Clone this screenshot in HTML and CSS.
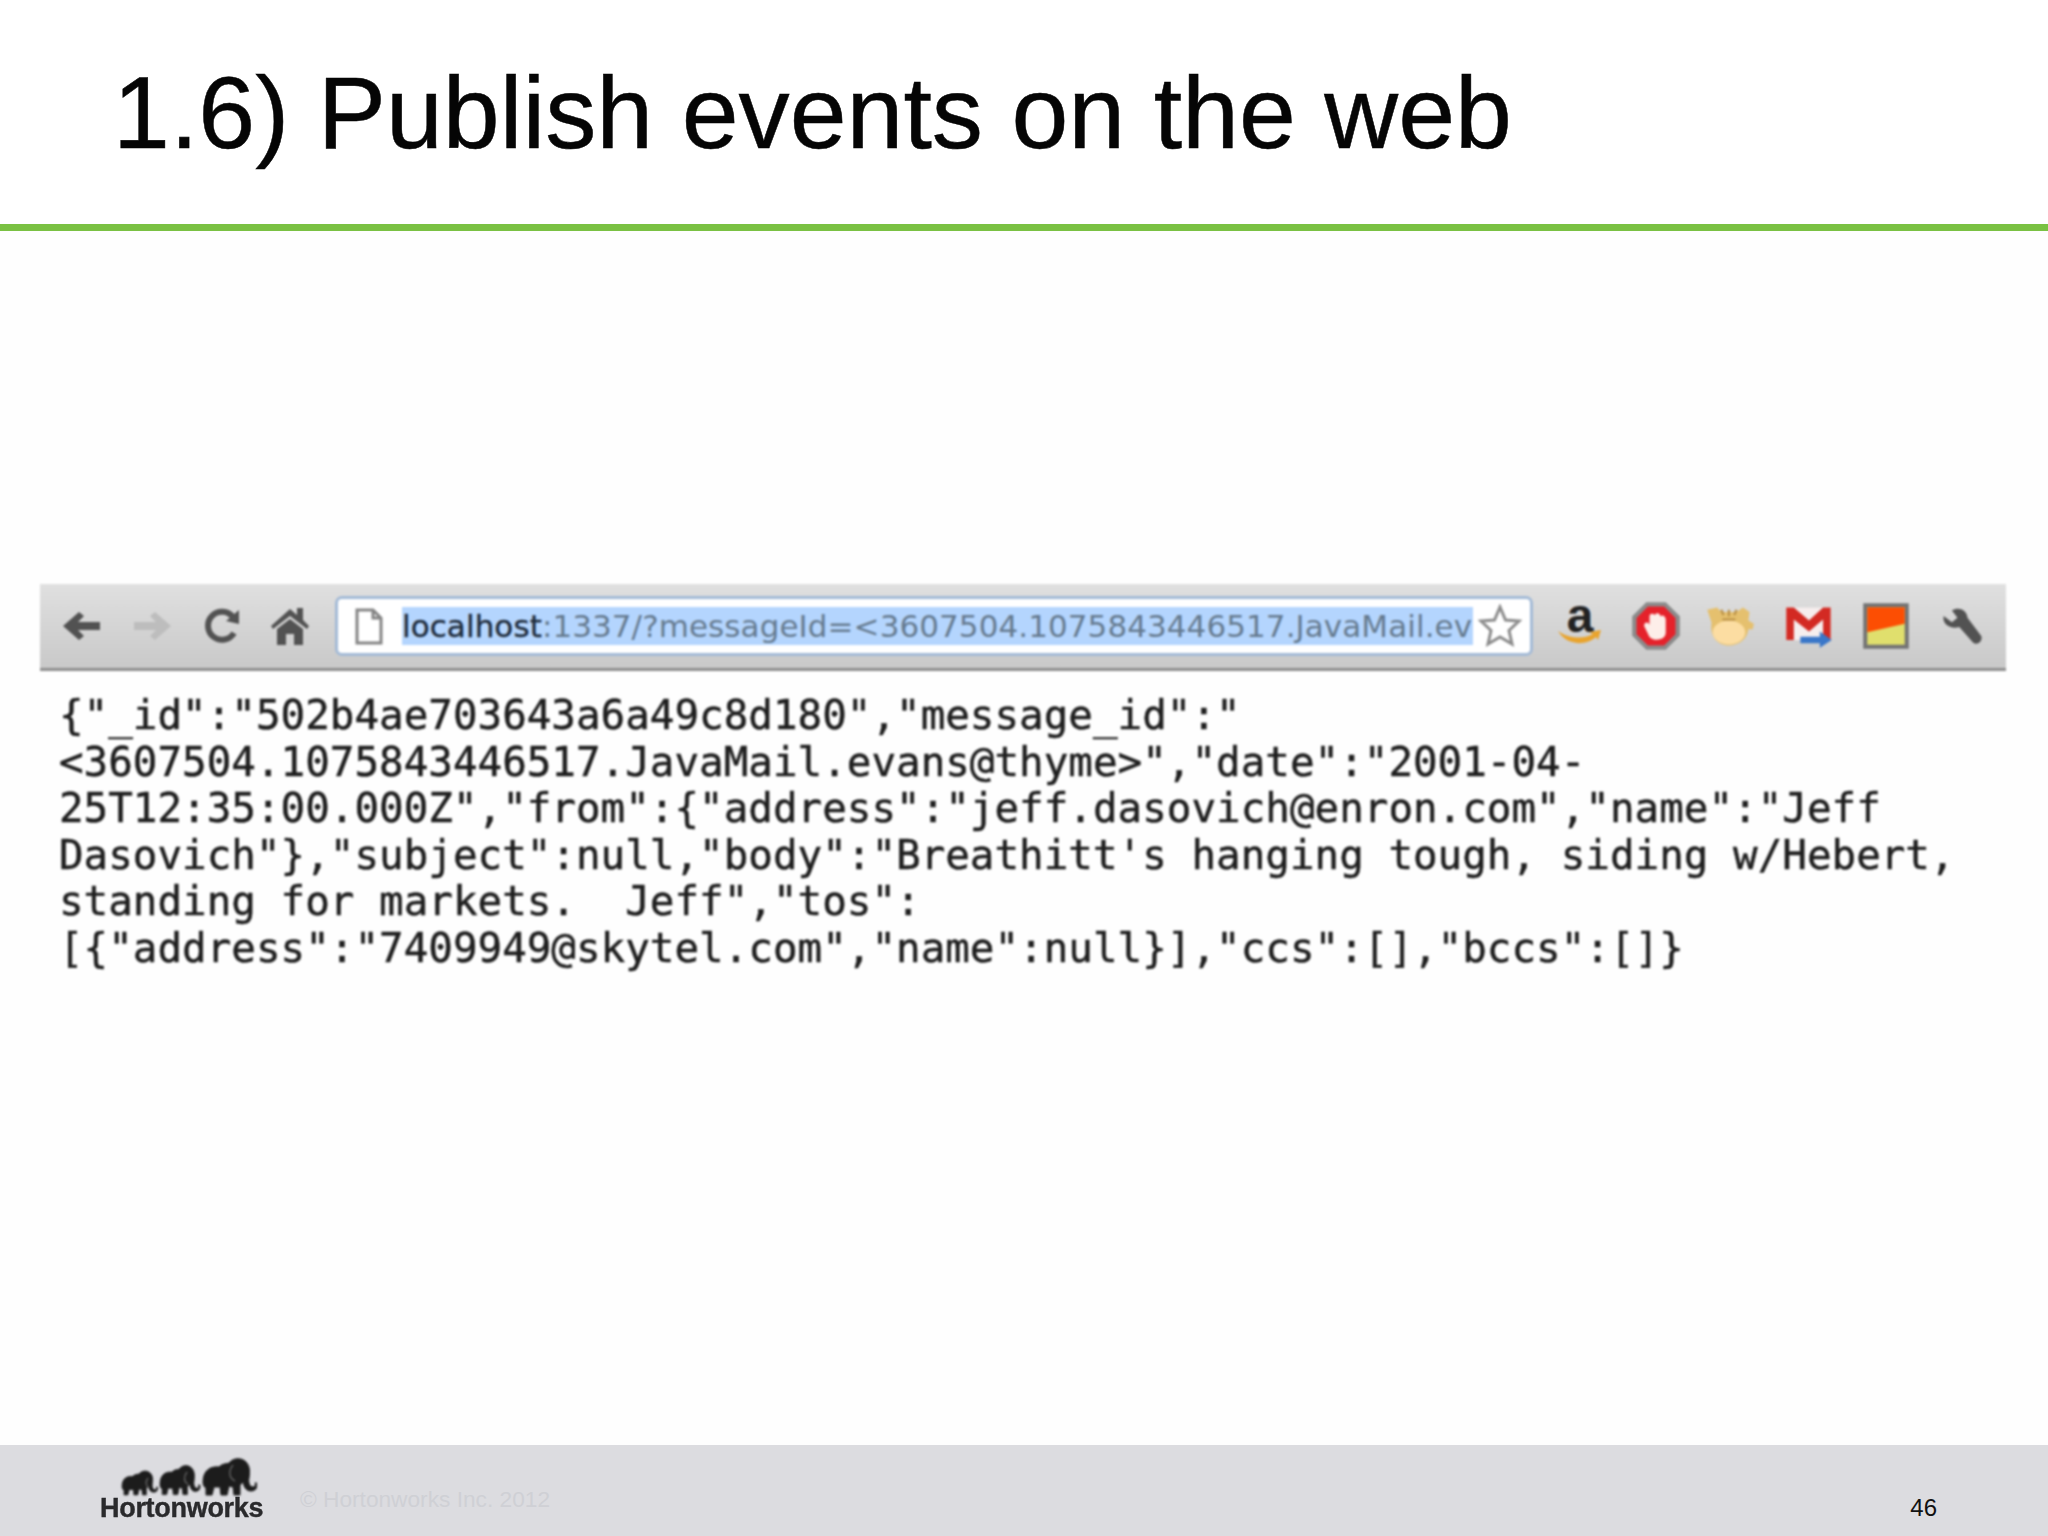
FILE: index.html
```html
<!DOCTYPE html>
<html lang="en">
<head>
<meta charset="utf-8">
<title>1.6) Publish events on the web</title>
<link rel="stylesheet" href="styles.css">
</head>
<body>
<div class="slide">
  <header class="head"><h1 class="title">1.6) Publish events on the web</h1></header>
  <div class="rule"></div>
  <main class="content">
    <section class="shot">
      <div class="toolbar">
        <svg class="ico" viewBox="0 0 44 44"><path class="nav-dark" d="M3 22 L19 8 L24 12 L18 18 H40 V26 H18 L24 32 L19 36 Z"/></svg>
        <svg class="ico" viewBox="0 0 44 44"><path class="nav-light" d="M41 22 L25 8 L20 12 L26 18 H4 V26 H26 L20 32 L25 36 Z"/></svg>
        <svg class="ico" viewBox="0 0 44 44"><path class="reload" d="M34 29 A14 14 0 1 1 33 13"/><path class="nav-dark" d="M26 17 L39 6 V20 Z"/></svg>
        <svg class="ico" viewBox="0 0 44 44"><path class="nav-dark" d="M22 5 L29 11 V4 H35 V16 L41 22 L39 25 L22 12 L5 25 L3 22 Z M9 25 L22 15 L35 25 V41 H26 V30 H18 V41 H9 Z"/></svg>
        <div class="urlbox">
          <svg class="doc" viewBox="0 0 28 37"><path d="M2 2 H18 L26 10 V35 H2 Z M18 2 V10 H26"/></svg>
          <div class="url"><span class="host">localhost</span>:1337/?messageId=&lt;3607504.1075843446517.JavaMail.ev</div>
          <svg class="star" viewBox="0 0 44 44"><path d="M22 3 L27.5 16 L41 17 L31 26.500 L34 40 L22 33 L10 40 L13 26.500 L3 17 L16.500 16 Z"/></svg>
        </div>
        <div class="amazon"><span class="amazon-a">a</span>
          <svg class="smile" viewBox="0 0 44 16"><path d="M0 2 C10 9 24 11 35 5 L31 3 L43 1 L40 11 L38 8 C28 17 9 17 0 2 Z"/></svg>
        </div>
        <svg class="ico ico-lg" viewBox="0 0 48 48"><path class="oct-out" d="M15 2 H33 L46 15 V33 L33 46 H15 L2 33 V15 Z"/><path class="oct-in" d="M16.500 6 H31.500 L42 16.500 V31.500 L31.500 42 H16.500 L6 31.500 V16.500 Z"/><path class="hand" d="M13 24 C13 20 17 20 18 23 V15 C18 12 22 12 23 14 C24 11 28 12 28 15 C30 13 33 15 33 18 V30 C33 38 19 39 17 32 Z"/></svg>
        <svg class="ico ico-lg" viewBox="0 0 48 48"><path class="cat-dark" d="M3 9 L12 7 L16 11 H30 L36 7 L42 11 L41 19 L46 22 L45 27 L41 27 C40 36 32 42 23 42 C13 42 5 34 7 21 Z"/><ellipse class="cat-light" cx="23" cy="30" rx="15" ry="11"/><path class="cat-mark" d="M18 14 L16 9 M23 15 V9 M28 14 L30 9 M17 18 H29"/></svg>
        <svg class="ico ico-lg" viewBox="0 0 48 48"><rect class="gm-white" x="3" y="7" width="41" height="30"/><path class="gm-red" d="M3 7 H10 L24 19 L37 7 H44 V37 H37 V18 L24 29 L10 18 V37 H3 Z"/><path class="gm-blue" d="M16 34 H34 V29 L45 37 L34 44 V40 H16 Z"/></svg>
        <svg class="ico ico-lg" viewBox="0 0 48 48"><rect class="sq-frame" x="3" y="3" width="42" height="42"/><rect class="sq-yellow" x="6.700" y="6.700" width="34.600" height="34.600"/><path class="sq-orange" d="M6.700 6.700 H41.300 V22 L6.700 29.800 Z"/></svg>
        <svg class="ico" viewBox="0 0 48 48"><path class="nav-dark" d="M4 13 L13 20 L19 15 L13 7 C20 3 29 6 30 15 L45 35 C47 40 41 46 36 42 L21 25 C12 28 2 22 4 13 Z"/></svg>
      </div>
      <div class="page">{"_id":"502b4ae703643a6a49c8d180","message_id":"
&lt;3607504.1075843446517.JavaMail.evans@thyme&gt;","date":"2001-04-
25T12:35:00.000Z","from":{"address":"jeff.dasovich@enron.com","name":"Jeff
Dasovich"},"subject":null,"body":"Breathitt's hanging tough, siding w/Hebert,
standing for markets.  Jeff","tos":
[{"address":"7409949@skytel.com","name":null}],"ccs":[],"bccs":[]}</div>
    </section>
  </main>
  <footer class="foot">
    <div class="logo">
      <svg class="herd" viewBox="0 0 136 38">
        <defs>
          <g id="eleph">
            <path d="M0 24 C0 12 8 8 16 9 C20 5 24 6 26 5 C30 0 38 -1 43 4 C47 8 47 14 46 20 C45 25 47 29 50 29 C52 29 53 27 52 25 L54 25 C55 30 52 33 48 33 C43 33 41 29 40 24 L37 27 L37 37 L31 37 L30 29 L26 28 L24 37 L18 37 L17 29 L11 29 L9 37 L3 37 L3 30 C1 29 0 27 0 24 Z"/>
          </g>
        </defs>
        <use href="#eleph" class="herd-one" transform="translate(1 12.500) scale(.66 .66)"/>
        <path class="herd-ear" d="M27 20 C24 24 25 28 28 30"/>
        <use href="#eleph" class="herd-one" transform="translate(39 7) scale(.74 .8)"/>
        <path class="herd-ear" d="M66 14 C62 19 63 24 67 26"/>
        <use href="#eleph" class="herd-one" transform="translate(82 0)"/>
        <path class="herd-ear" d="M112 7 C107 13 108 20 114 23"/>
      </svg>
      <div class="brand">Hortonworks</div>
    </div>
    <div class="copy">© Hortonworks Inc. 2012</div>
    <div class="pageno">46</div>
  </footer>
</div>
</body>
</html>
```

FILE: styles.css
```css
* { box-sizing: border-box; }
html, body { margin: 0; padding: 0; background: #fff; }
.slide { width: 2048px; height: 1536px; display: flex; flex-direction: column; overflow: hidden; font-family: "Liberation Sans", Arial, sans-serif; background: #fff; }

.head { height: 224px; padding: 47px 0 0 113px; }
.title { margin: 0; font-weight: 400; font-size: 102.3px; line-height: 132px; color: #050505; white-space: nowrap; -webkit-text-stroke: .5px #050505; }
.rule { height: 7px; background: #7ac143; }

.content { flex: 1; padding: 353px 42px 0 40px; background: #fefefe; }
.shot { filter: blur(.9px); }

.toolbar { height: 87px; padding: 0 0 0 7px; display: grid; grid-template-columns: 70px 70px 70px 66px 1219px 76px 76px 72px 86px 68px 84px; align-items: center; justify-items: center; background: linear-gradient(#e0e0e0, #c9c9c9); border-bottom: 3px solid #8e8e8e; }
.ico { width: 44px; height: 44px; display: block; }
.ico-lg { width: 52px; height: 52px; }
.nav-dark { fill: #525252; }
.nav-light { fill: #bdbdbd; }
.reload { fill: none; stroke: #525252; stroke-width: 6; }

.urlbox { justify-self: stretch; margin: 0 9px 0 12px; height: 60px; padding: 0 20px 0 17px; display: flex; align-items: center; gap: 19px; background: #fff; border: 3px solid #a3bad6; border-radius: 7px; position: relative; }
.doc { width: 28px; height: 37px; flex: none; fill: none; stroke: #858585; stroke-width: 3; }
.url { width: 1071px; height: 38px; flex: none; overflow: hidden; white-space: nowrap; background: #b4d5fe; color: #667b90; font-family: "DejaVu Sans", sans-serif; font-size: 31px; line-height: 38px; letter-spacing: .08px; }
.host { color: #1f2d3d; -webkit-text-stroke: .4px #1f2d3d; }
.star { position: absolute; right: 8px; top: 5px; width: 44px; height: 44px; fill: #fff; stroke: #8c8c8c; stroke-width: 3; }

.amazon { width: 46px; height: 46px; display: flex; flex-direction: column; align-items: center; }
.amazon-a { font-size: 48px; line-height: 26px; height: 26px; font-weight: 700; color: #222; }
.smile { width: 44px; height: 16px; fill: #e9a42e; }

.oct-out { fill: #8b8b8b; }
.oct-in { fill: #e5222b; }
.hand { fill: #fdeee9; }
.cat-dark { fill: #e5c06e; }
.cat-light { fill: #fcdda2; }
.cat-mark { fill: none; stroke: #b98f45; stroke-width: 2; }
.gm-white { fill: #f6eeee; }
.gm-red { fill: #d32a23; }
.gm-blue { fill: #3a77c9; }
.sq-frame { fill: #737373; }
.sq-yellow { fill: #e0df6d; }
.sq-orange { fill: #fc4e03; }

.page { margin: 0; padding: 21px 0 0 19px; font-family: "DejaVu Sans Mono", monospace; font-size: 40.9px; line-height: 46.6px; color: #1e1e1e; white-space: pre; -webkit-text-stroke: .5px #1e1e1e; }

.foot { height: 91px; padding: 13px 42px 0 100px; display: flex; align-items: flex-start; background: #dcdce0; }
.logo { width: 166px; display: flex; flex-direction: column; }
.herd { width: 136px; height: 38px; margin-left: 21px; display: block; filter: blur(.8px); }
.herd-one { fill: #1c1c1c; stroke: #1c1c1c; stroke-width: 1; }
.herd-ear { fill: none; stroke: #5c5c5c; stroke-width: 1.500; }
.brand { font-size: 27px; line-height: 25px; font-weight: 700; letter-spacing: -.3px; color: #2a2a2c; white-space: nowrap; -webkit-text-stroke: .4px #2a2a2c; filter: blur(.6px); }
.copy { margin: 27px 0 0 34px; font-size: 22.7px; line-height: 28px; color: #cfd0d5; white-space: nowrap; }
.pageno { margin: 36px 0 0 auto; padding-right: 69px; font-size: 24px; line-height: 28px; color: #111; }
```
